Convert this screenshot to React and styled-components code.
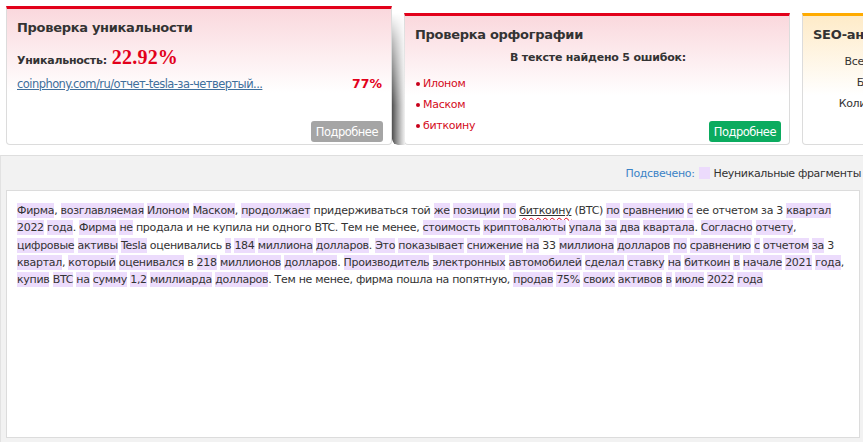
import React from 'react';
import styled, { createGlobalStyle } from 'styled-components';

const GlobalStyle = createGlobalStyle`
  html, body {
    margin: 0;
    padding: 0;
    background: #fff;
    overflow: hidden;
  }
  body {
    font-family: "DejaVu Sans", Verdana, sans-serif;
    color: #333;
  }
`;

const Page = styled.div`
  width: 863px;
  height: 442px;
  overflow: hidden;
  display: flex;
  flex-direction: column;
`;

const CardsRow = styled.div`
  display: flex;
  align-items: flex-start;
  gap: 12px;
  height: 149px;
  padding: 6px 0 0 6px;
  flex-shrink: 0;
`;

const Card = styled.div`
  position: relative;
  flex-shrink: 0;
  box-sizing: border-box;
  width: 386px;
  height: ${p => p.$raised ? 132 : 139}px;
  margin-top: ${p => p.$raised ? 7 : 0}px;
  border: 1px solid #dcdcdc;
  border-top: 3px solid ${p => p.$accent};
  border-radius: 0 0 4px 4px;
  background: linear-gradient(to bottom, ${p => p.$tint} 0%, #fff 62%);
  padding: 10px 8px 2px 10px;
  display: flex;
  flex-direction: column;

  ${p => p.$shadow && `
    &::before {
      content: "";
      position: absolute;
      left: -13px;
      top: -3px;
      bottom: -1px;
      width: 13px;
      border-radius: 0 0 0 6px;
      background: linear-gradient(to right, #4f4f4f 0%, #8f8f8f 35%, #d0d0d0 75%, #f2f2f2 100%);
      -webkit-mask-image: linear-gradient(to bottom, transparent 0%, rgba(0,0,0,.4) 22%, #000 70%);
      mask-image: linear-gradient(to bottom, transparent 0%, rgba(0,0,0,.4) 22%, #000 70%);
    }
  `}
`;

const CardTitle = styled.div`
  font-size: 13px;
  font-weight: bold;
  color: #333;
  line-height: 18px;
  white-space: nowrap;
  letter-spacing: -0.3px;
`;

const ScoreRow = styled.div`
  margin-top: 9px;
  display: flex;
  align-items: baseline;
  gap: 5px;
  font-size: 11px;
  font-weight: bold;
  letter-spacing: -0.25px;
`;

const Score = styled.span`
  font-family: "Liberation Serif", "Times New Roman", serif;
  font-size: 20px;
  font-weight: bold;
  color: #e2001a;
  letter-spacing: 0.2px;
`;

const SourceRow = styled.div`
  margin-top: 7px;
  display: flex;
  justify-content: space-between;
  align-items: baseline;
  padding-right: 1px;
`;

const SourceLink = styled.a`
  font-size: 11.5px;
  color: #3f6f9c;
  text-decoration: underline;
  letter-spacing: -0.55px;
  white-space: nowrap;
`;

const Percent = styled.span`
  font-size: 12.5px;
  font-weight: bold;
  color: #e2001a;
`;

const MoreButton = styled.button`
  margin-top: auto;
  align-self: flex-end;
  border: none;
  border-radius: 3px;
  height: 21px;
  padding: 0 5px;
  font-family: "DejaVu Sans", Verdana, sans-serif;
  font-size: 11.5px;
  letter-spacing: -0.5px;
  color: #fff;
  background: ${p => p.$green ? '#0bab5f' : '#a5a5a5'};
  cursor: pointer;
`;

const Subhead = styled.div`
  margin-top: 7px;
  text-align: center;
  font-size: 11px;
  font-weight: bold;
  letter-spacing: -0.2px;
`;

const ErrorList = styled.ul`
  list-style: none;
  margin: 9px 0 0;
  padding: 0;
`;

const ErrorItem = styled.li`
  position: relative;
  padding-left: 8px;
  font-size: 11px;
  line-height: 21px;
  color: #d40b22;
  letter-spacing: -0.3px;

  &::before {
    content: "";
    position: absolute;
    left: 1px;
    top: 9px;
    width: 4px;
    height: 4px;
    border-radius: 50%;
    background: #c8001a;
  }
`;

const ErrorsFooter = styled.div`
  position: absolute;
  right: 8px;
  bottom: 2px;
  display: flex;
`;

const StatsGrid = styled.div`
  margin-top: 7px;
  display: grid;
  grid-template-columns: 122px auto;
  column-gap: 6px;
  font-size: 11px;
  line-height: 21px;
  letter-spacing: -0.3px;
`;

const StatLabel = styled.span`
  text-align: right;
  white-space: nowrap;
`;

const StatValue = styled.span`
  font-weight: bold;
`;

const Report = styled.div`
  flex: 1;
  background: #f2f2f2;
  border-top: 1px solid #dedede;
  border-left: 1px solid #e2e2e2;
  display: flex;
  flex-direction: column;
  padding: 0 3px 4px 5px;
`;

const Legend = styled.div`
  height: 34px;
  display: flex;
  align-items: center;
  justify-content: flex-end;
  gap: 4px;
  font-size: 11px;
  letter-spacing: -0.35px;
  white-space: nowrap;
  margin-right: -1px;
`;

const LegendLabel = styled.span`
  color: #3b83c6;
`;

const Swatch = styled.span`
  display: inline-block;
  width: 11px;
  height: 12px;
  background: #ecdbfc;
`;

const TextBox = styled.div`
  flex: 1;
  background: #fff;
  border: 1px solid #dcdcdc;
  padding: 11px 10px;
  font-size: 11px;
  line-height: 17.3px;
  letter-spacing: -0.3px;
  color: #333;
`;

const Line = styled.div`
  white-space: nowrap;
`;

const Mark = styled.span`
  background: #ecdcfc;
  padding: 1px 0;
`;

const Misspelled = styled.span`
  text-decoration: underline;
  text-decoration-color: #333;
  text-underline-offset: 1px;
`;

const Wavy = styled.span`
  text-decoration: underline wavy #e0001a;
  text-decoration-thickness: 1px;
  text-underline-offset: 3px;
`;

// "*" prefix marks a non-unique fragment, "~" marks a spelling error
const lines = [
  ['*Фирма', ', ', '*возглавляемая', ' ', '*Илоном', ' ', '*Маском', ', ', '*продолжает', ' придерживаться той ', '*же', ' ', '*позиции', ' ', '*по', ' ', '~биткоину', ' (BTC) ', '*по', ' ', '*сравнению', ' ', '*с', ' ее отчетом за 3 ', '*квартал'],
  ['*2022', ' ', '*года', '. ', '*Фирма', ' ', '*не', ' продала и не купила ни одного BTC. Тем не менее, ', '*стоимость', ' ', '*криптовалюты', ' ', '*упала', ' ', '*за', ' ', '*два', ' ', '*квартала', '. ', '*Согласно', ' ', '*отчету', ','],
  ['*цифровые', ' ', '*активы', ' ', '*Tesla', ' оценивались ', '*в', ' ', '*184', ' ', '*миллиона', ' ', '*долларов', '. ', '*Это', ' ', '*показывает', ' ', '*снижение', ' ', '*на', ' 33 ', '*миллиона', ' ', '*долларов', ' ', '*по', ' ', '*сравнению', ' ', '*с', ' ', '*отчетом', ' ', '*за', ' 3'],
  ['*квартал', ', ', '*который', ' ', '*оценивался', ' в ', '*218', ' ', '*миллионов', ' ', '*долларов', '. ', '*Производитель', ' ', '*электронных', ' ', '*автомобилей', ' ', '*сделал', ' ', '*ставку', ' ', '*на', ' ', '*биткоин', ' ', '*в', ' ', '*начале', ' ', '*2021', ' ', '*года', ','],
  ['*купив', ' ', '*BTC', ' ', '*на', ' ', '*сумму', ' ', '*1,2', ' ', '*миллиарда', ' ', '*долларов', '. Тем не менее, фирма пошла на попятную, ', '*продав', ' ', '*75%', ' ', '*своих', ' ', '*активов', ' ', '*в', ' ', '*июле', ' ', '*2022', ' ', '*года'],
];

const renderPart = (part, i) => {
  if (part[0] === '*') return <Mark key={i}>{part.slice(1)}</Mark>;
  if (part[0] === '~') return <Misspelled key={i}><Wavy>{part.slice(1)}</Wavy></Misspelled>;
  return <React.Fragment key={i}>{part}</React.Fragment>;
};

const errors = ['Илоном', 'Маском', 'биткоину'];

const App = () => (
  <Page>
    <GlobalStyle />
    <CardsRow>
      <Card $accent="#e2001a" $tint="#fad8dd">
        <CardTitle>Проверка уникальности</CardTitle>
        <ScoreRow>
          Уникальность: <Score>22.92%</Score>
        </ScoreRow>
        <SourceRow>
          <SourceLink href="#">coinphony.com/ru/отчет-tesla-за-четвертый...</SourceLink>
          <Percent>77%</Percent>
        </SourceRow>
        <MoreButton>Подробнее</MoreButton>
      </Card>

      <Card $accent="#e2001a" $tint="#fad8dd" $raised $shadow>
        <CardTitle>Проверка орфографии</CardTitle>
        <Subhead>В тексте найдено 5 ошибок:</Subhead>
        <ErrorList>
          {errors.map(e => <ErrorItem key={e}>{e}</ErrorItem>)}
        </ErrorList>
        <ErrorsFooter>
          <MoreButton $green>Подробнее</MoreButton>
        </ErrorsFooter>
      </Card>

      <Card $accent="#ffab00" $tint="#feebc8" $raised>
        <CardTitle>SEO-анализ текста</CardTitle>
        <StatsGrid>
          <StatLabel>Всего символов:</StatLabel>
          <StatValue>1146</StatValue>
          <StatLabel>Без пробелов:</StatLabel>
          <StatValue>973</StatValue>
          <StatLabel>Количество слов:</StatLabel>
          <StatValue>174</StatValue>
        </StatsGrid>
      </Card>
    </CardsRow>

    <Report>
      <Legend>
        <LegendLabel>Подсвечено:</LegendLabel>
        <Swatch />
        <span>Неуникальные фрагменты</span>
      </Legend>
      <TextBox>
        {lines.map((parts, n) => (
          <Line key={n}>{parts.map(renderPart)}</Line>
        ))}
      </TextBox>
    </Report>
  </Page>
);

export default App;
